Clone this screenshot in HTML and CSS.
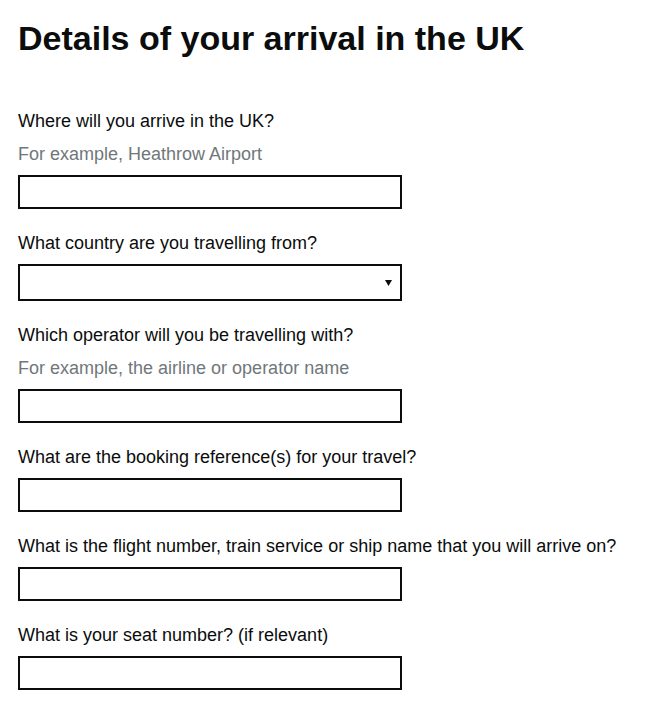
FILE: index.html
```html
<!DOCTYPE html>
<html lang="en">
<head>
    <meta charset="UTF-8">
    <meta name="viewport" content="width=device-width, initial-scale=1.0">
    <title>Details of your arrival in the UK</title>
    <link rel="stylesheet" href="styles.css">
</head>
<body>
    <main class="page">
        <h1 class="page-title">Details of your arrival in the UK</h1>

        <form class="arrival-form">
            <!-- Porto de chegada -->
            <div class="field">
                <label class="field-label" for="port">Where will you arrive in the UK?</label>
                <span class="field-hint">For example, Heathrow Airport</span>
                <input class="field-input" type="text" id="port">
            </div>

            <!-- País de origem -->
            <div class="field">
                <label class="field-label" for="country">What country are you travelling from?</label>
                <div class="select-wrap">
                    <select class="field-select" id="country">
                        <option value=""></option>
                    </select>
                    <svg class="select-arrow" width="7" height="6" viewBox="0 0 7 6">
                        <path d="M0 0H7L3.5 6Z" fill="#0b0c0c"/>
                    </svg>
                </div>
            </div>

            <div class="field">
                <label class="field-label" for="operator">Which operator will you be travelling with?</label>
                <span class="field-hint">For example, the airline or operator name</span>
                <input class="field-input" type="text" id="operator">
            </div>

            <div class="field">
                <label class="field-label" for="booking">What are the booking reference(s) for your travel?</label>
                <input class="field-input" type="text" id="booking">
            </div>

            <div class="field">
                <label class="field-label" for="service">What is the flight number, train service or ship name that you will arrive on?</label>
                <input class="field-input" type="text" id="service">
            </div>

            <div class="field">
                <label class="field-label" for="seat">What is your seat number? (if relevant)</label>
                <input class="field-input" type="text" id="seat">
            </div>
        </form>
    </main>
</body>
</html>
```

FILE: styles.css
```css
/* Estilo geral */
body {
    margin: 0;
    background-color: #ffffff;
    color: #0b0c0c;
    font-family: "Liberation Sans", Arial, sans-serif;
}

.page {
    padding: 14px 18px 0;
}

/* Título */
.page-title {
    font-size: 34px;
    line-height: 48px;
    font-weight: 700;
    margin: 0 0 47px;
}

/* Campos */
.field {
    margin-bottom: 22px;
}

.field-label,
.field-hint {
    display: block;
    font-size: 18px;
    line-height: 25px;
    margin-bottom: 8px;
}

.field-hint {
    color: #6f777b;
}

.field-input,
.field-select {
    display: block;
    box-sizing: border-box;
    width: 384px;
    height: 34px;
    margin: 0;
    padding: 4px;
    border: 2px solid #0b0c0c;
    border-radius: 0;
    background-color: #ffffff;
    font-family: inherit;
    font-size: 18px;
}

/* Seleção */
.select-wrap {
    position: relative;
    width: 384px;
}

.field-select {
    height: 37px;
    appearance: none;
    -webkit-appearance: none;
}

.select-arrow {
    position: absolute;
    top: 16px;
    right: 10px;
}
```
